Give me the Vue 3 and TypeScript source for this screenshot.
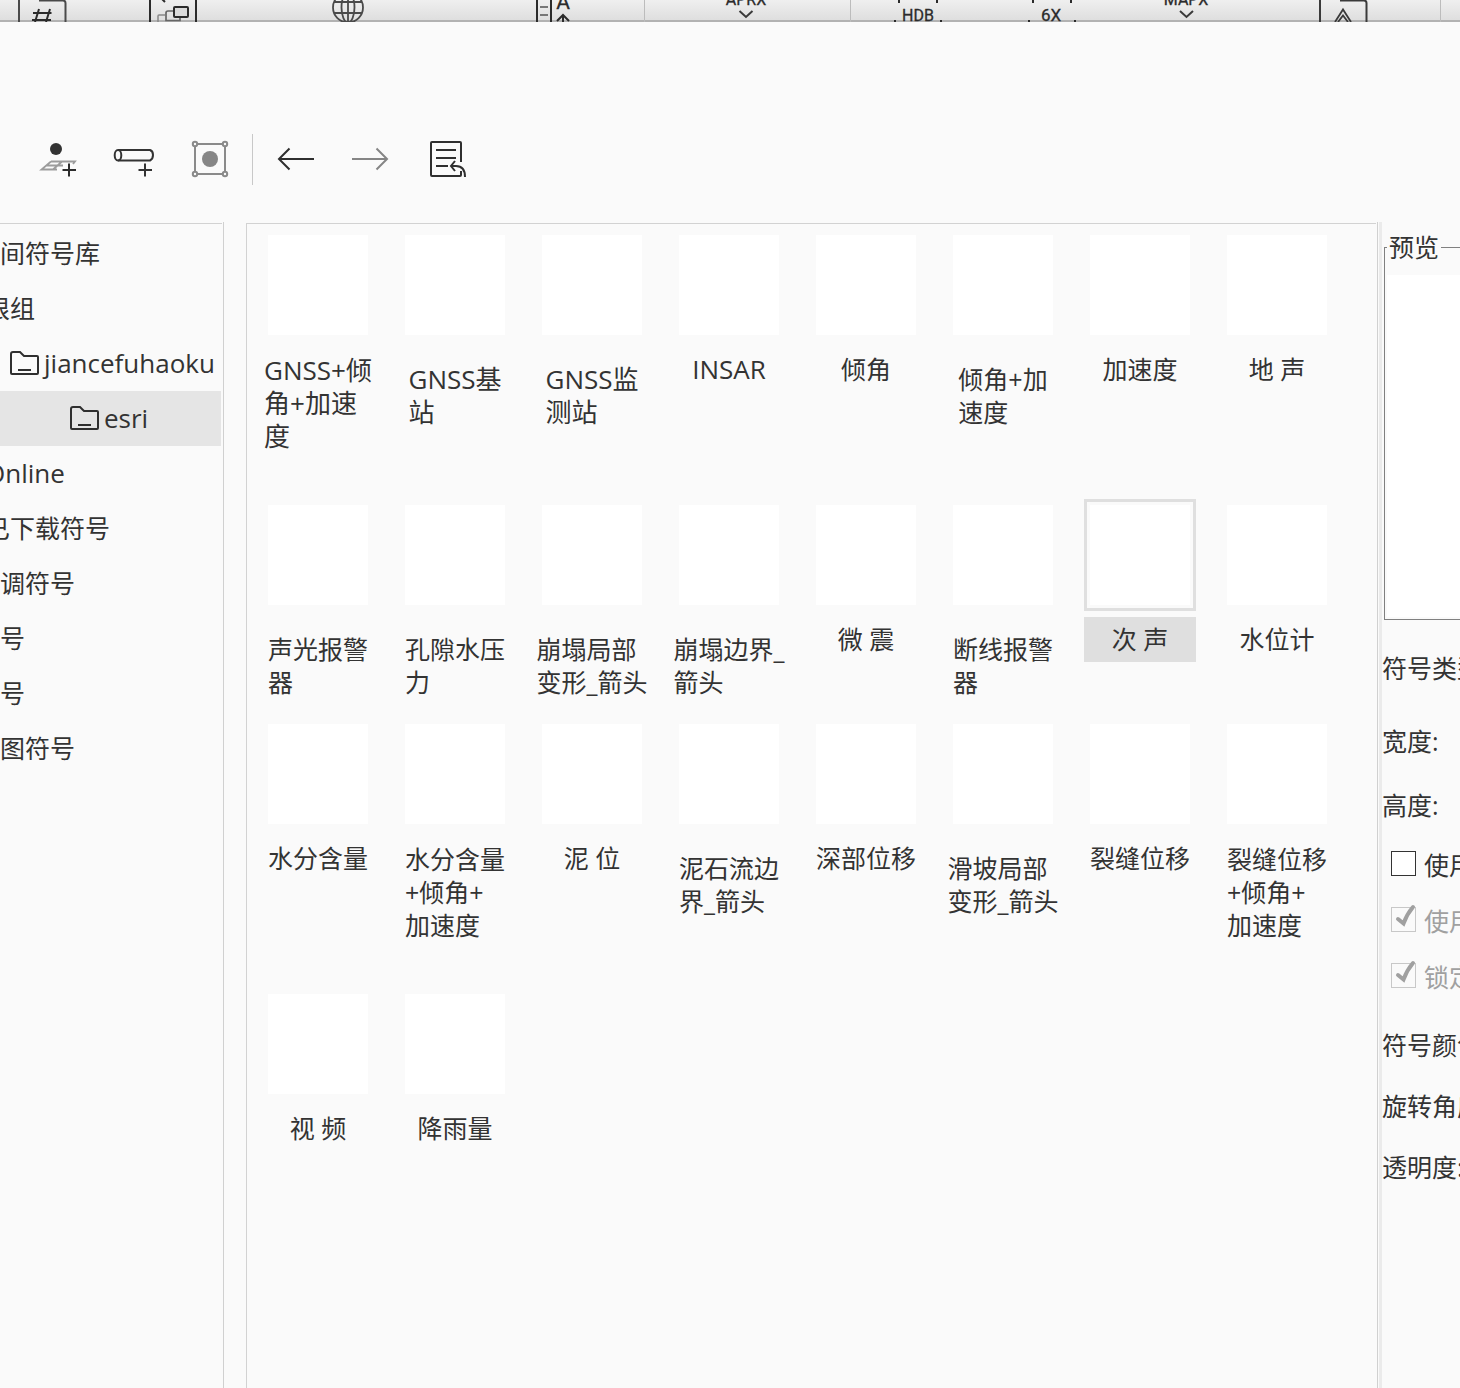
<script setup lang="ts">
import { ref } from 'vue'

interface TreeNode {
  label: string
  folder?: boolean
  level?: string
}

interface PropertyRow {
  label: string
  group: string
}

interface CheckRow {
  id: string
  label: string
  checked: boolean
  disabled: boolean
}

const tree: TreeNode[] = [
  { label: '间符号库' },
  { label: '根组', level: 'cut' },
  { label: 'jiancefuhaoku', folder: true, level: 'child' },
  { label: 'esri', folder: true, level: 'grandchild' },
  { label: 'Online', level: 'cut' },
  { label: '已下载符号', level: 'cut' },
  { label: '调符号' },
  { label: '号' },
  { label: '号' },
  { label: '图符号' },
]
const activeNode = ref('esri')

const symbols: string[] = [
  'GNSS+倾\n角+加速\n度', 'GNSS基\n站', 'GNSS监\n测站', 'INSAR', '倾角', '倾角+加\n速度', '加速度', '地 声',
  '声光报警\n器', '孔隙水压\n力', '崩塌局部\n变形_箭头', '崩塌边界_\n箭头', '微 震', '断线报警\n器', '次 声', '水位计',
  '水分含量', '水分含量\n+倾角+\n加速度', '泥 位', '泥石流边\n界_箭头', '深部位移', '滑坡局部\n变形_箭头', '裂缝位移', '裂缝位移\n+倾角+\n加速度',
  '视 频', '降雨量',
]
const activeSymbol = ref('次 声')

const lineCount = (name: string): number => name.split('\n').length
const isLatin = (name: string): boolean => /[A-Za-z]/.test(name)

const sizeRows: PropertyRow[] = [
  { label: '符号类型:', group: 'type' },
  { label: '宽度:', group: 'size' },
  { label: '高度:', group: 'size' },
]
const styleRows: string[] = ['符号颜色:', '旋转角度:', '透明度:']

const checks = ref<CheckRow[]>([
  { id: 'opt-a', label: '使用', checked: false, disabled: false },
  { id: 'opt-b', label: '使用', checked: true, disabled: true },
  { id: 'opt-c', label: '锁定', checked: true, disabled: true },
])
</script>

<template>
  <div class="window">
    <header class="ribbon">
      <div class="ribbon-group">
        <button type="button" aria-label="网格">
          <svg width="84" height="22" viewBox="0 0 84 22">
            <path d="M19 0V22M39 0.500H63Q65.500 0.500 65.500 3V22" stroke="#4a4a4a" stroke-width="2" fill="none" />
            <path d="M39 9L35 22M50 9L46 22M33 13H51.500M32 20H51" stroke="#2b2b2b" stroke-width="2" fill="none" />
          </svg>
        </button>
        <button type="button" aria-label="层级">
          <svg width="176" height="22" viewBox="84 0 176 22">
            <path d="M150 0V22M196 0V22M162 -1L165 2" stroke="#2b2b2b" stroke-width="2" fill="none" />
            <path d="M165 15H159Q158 15 158 16V22" stroke="#888" stroke-width="1.500" fill="none" />
            <path d="M173 11H168Q166 11 166 13V20.500H180V17" stroke="#666" stroke-width="1.700" fill="none" />
            <rect x="174" y="7" width="14" height="10" rx="1" fill="#dadada" stroke="#2b2b2b" stroke-width="2" />
          </svg>
        </button>
        <button type="button" aria-label="在线">
          <svg width="176" height="22" viewBox="260 0 176 22">
            <g stroke="#4a4a4a" stroke-width="1.800" fill="none">
              <circle cx="348" cy="7.500" r="15" />
              <ellipse cx="348" cy="7.500" rx="6.500" ry="15" />
              <path d="M348 -8V22M334 2H362M334 13H362" />
            </g>
          </svg>
        </button>
        <button type="button" aria-label="标注">
          <svg width="208" height="22" viewBox="436 0 208 22">
            <path d="M537 0V22M551 0V22" stroke="#2b2b2b" stroke-width="2" fill="none" />
            <path d="M540 7H548M540 15H548" stroke="#777" stroke-width="2" />
            <text x="563" y="9" font-size="21" text-anchor="middle">A</text>
            <path d="M557 21L563 15L569 21M563 15V22" stroke="#2b2b2b" stroke-width="2" fill="none" />
          </svg>
        </button>
      </div>
      <div class="ribbon-group">
        <button type="button" aria-label="APRX">
          <svg width="205" height="22" viewBox="645 0 205 22">
            <text x="746" y="5" font-size="16" text-anchor="middle">APRX</text>
            <path d="M739.500 11L746 17L752.500 11" stroke="#3a3a3a" stroke-width="2" fill="none" />
          </svg>
        </button>
      </div>
      <div class="ribbon-group">
        <button type="button" aria-label="HDB">
          <svg width="134" height="22" viewBox="851 0 134 22">
            <path d="M899 0V3M937 0V3M894 21H896M940 21H942" stroke="#2b2b2b" stroke-width="2" />
            <text x="918" y="21" font-size="16" text-anchor="middle">HDB</text>
          </svg>
        </button>
        <button type="button" aria-label="6X">
          <svg width="130" height="22" viewBox="985 0 130 22">
            <path d="M1033 0V3M1071 0V3M1028 21H1030M1074 21H1076" stroke="#2b2b2b" stroke-width="2" />
            <text x="1051" y="21" font-size="17" text-anchor="middle">6X</text>
          </svg>
        </button>
        <button type="button" aria-label="MAPX">
          <svg width="145" height="22" viewBox="1115 0 145 22">
            <text x="1186" y="5" font-size="16" text-anchor="middle">MAPX</text>
            <path d="M1180 11L1186.500 17L1193 11" stroke="#3a3a3a" stroke-width="2" fill="none" />
          </svg>
        </button>
        <button type="button" aria-label="字体">
          <svg width="180" height="22" viewBox="1260 0 180 22">
            <path d="M1320 0V22M1340 0.500H1364Q1366.500 0.500 1366.500 3V22" stroke="#3a3a3a" stroke-width="2" fill="none" />
            <path d="M1335 22L1343 9.500L1351 22M1338 22L1343 15.500L1348 22" stroke="#3a3a3a" stroke-width="1.800" fill="none" />
          </svg>
        </button>
      </div>
    </header>

    <nav class="toolbar" aria-label="符号工具">
      <button type="button" aria-label="新建点符号">
        <svg viewBox="20 134 76 51">
          <circle cx="56" cy="149" r="6" fill="#333" />
          <path d="M51 161.500H75L73 164M51 161.500L41.500 169.500H57M46 165.500H63M62 161.500L53 169.500" stroke="#9c9c9c" stroke-width="1.800" fill="none" />
          <path d="M62.500 170H76M69 163.500V176.500" stroke="#2b2b2b" stroke-width="2" />
        </svg>
      </button>
      <button type="button" aria-label="新建线符号">
        <svg viewBox="96 134 76 51">
          <g stroke="#333" stroke-width="2" fill="none">
            <path d="M118 150H150Q153 151 153 155T150 160.500H118" />
            <ellipse cx="118" cy="155.200" rx="3.300" ry="5.200" />
            <path d="M138.500 170H152M145 163.500V176.500" />
          </g>
        </svg>
      </button>
      <button type="button" aria-label="新建面符号">
        <svg viewBox="172 134 76 51">
          <g stroke="#8a8a8a" stroke-width="2" fill="#fafafa">
            <rect x="195" y="144" width="30" height="30" />
            <circle cx="195" cy="144" r="2.200" />
            <circle cx="225" cy="144" r="2.200" />
            <circle cx="195" cy="174" r="2.200" />
            <circle cx="225" cy="174" r="2.200" />
          </g>
          <circle cx="210" cy="159" r="8" fill="#868686" />
        </svg>
      </button>
      <span class="divider"></span>
      <button type="button" aria-label="撤销">
        <svg viewBox="258 134 76 51">
          <path d="M314 159H279M289.500 148.500L279 159L289.500 169.500" stroke="#2f2f2f" stroke-width="2" fill="none" />
        </svg>
      </button>
      <button type="button" aria-label="重做" disabled>
        <svg viewBox="334 134 76 51">
          <path d="M352 159H387M376.500 148.500L387 159L376.500 169.500" stroke="#858585" stroke-width="2" fill="none" />
        </svg>
      </button>
      <button type="button" aria-label="还原">
        <svg viewBox="410 134 76 51">
          <g stroke="#2f2f2f" stroke-width="2" fill="none">
            <path d="M461 162V143Q461 142 460 142H432Q431 142 431 143V175Q431 176 432 176H460Q461 176 461 175V171" />
            <path d="M436 150H456M436 158H456M436 166H448M455 161L451 166L455 171M451 166H456Q465 166 465 177" />
          </g>
        </svg>
      </button>
    </nav>

    <main class="workspace">
      <aside class="tree-pane">
        <ul class="tree">
          <li
            v-for="(node, i) in tree"
            :key="i"
            :class="[node.level, { active: node.label === activeNode, latin: isLatin(node.label) }]"
            @click="activeNode = node.label"
          >
            <svg v-if="node.folder" class="folder" width="30" height="26" viewBox="0 0 30 26" aria-hidden="true">
              <path d="M3 1H10L14 5H27Q28 5 28 6V22Q28 23 27 23H2Q1 23 1 22V3Q1 1 3 1ZM8 19H21" stroke="#2f2f2f" stroke-width="2" fill="none" />
            </svg>
            <span>{{ node.label }}</span>
          </li>
        </ul>
      </aside>
      <div class="edge left-edge"></div>

      <section class="symbols">
        <div
          v-for="name in symbols"
          :key="name"
          class="symbol"
          :class="{ active: name === activeSymbol, latin: isLatin(name) }"
          @click="activeSymbol = name"
        >
          <div class="frame"><div class="thumb"></div></div>
          <div class="caption" :class="'lines-' + lineCount(name)"><span>{{ name }}</span></div>
        </div>
      </section>
      <div class="edge right-edge"></div>
      <div class="splitter"></div>

      <aside class="props">
        <fieldset class="preview">
          <legend>预览</legend>
          <div class="canvas"></div>
        </fieldset>
        <div v-for="row in sizeRows" :key="row.label" class="prop" :class="row.group">{{ row.label }}</div>
        <div class="checks">
          <label v-for="c in checks" :key="c.id" :for="c.id" :class="{ disabled: c.disabled }">
            <span class="box">
              <input :id="c.id" v-model="c.checked" type="checkbox" :disabled="c.disabled" />
              <svg v-if="c.checked" width="25" height="29" viewBox="0 0 25 29" aria-hidden="true">
                <path d="M7 16L12.500 20.500Q16 11 22 4" stroke="#a0a0a0" stroke-width="4" stroke-linecap="round" fill="none" />
              </svg>
            </span>
            <span>{{ c.label }}</span>
          </label>
        </div>
        <div v-for="label in styleRows" :key="label" class="prop">{{ label }}</div>
      </aside>
    </main>
  </div>
</template>

<style>
body {
  margin: 0;
  background: #fafafa;
}
</style>

<style scoped>
.window {
  display: flex;
  flex-direction: column;
  min-height: 100vh;
  overflow: hidden;
  background: #fafafa;
  color: #333;
  font-family: "Open Sans", "Noto Sans CJK SC", sans-serif;
  font-size: 25px;
  line-height: 33px;
}

.latin {
  font-size: 26px;
}

button {
  padding: 0;
  border: 0;
  background: none;
}

svg {
  display: block;
}

.ribbon {
  display: flex;
  height: 22px;
  overflow: hidden;
  background: linear-gradient(transparent 20px, #b2b2b2 20px), linear-gradient(#efefef, #dddddd);
}

.ribbon-group {
  display: flex;
  border-right: 1px solid #bcbcbc;
}

.ribbon text {
  fill: #2b2b2b;
  stroke: #2b2b2b;
  stroke-width: 0.3px;
  font-family: Roboto, sans-serif;
}

.toolbar {
  display: flex;
  height: 51px;
  padding: 112px 20px 37px;
}

.toolbar svg {
  width: 76px;
  height: 51px;
}

.divider {
  width: 1px;
  margin: 0 5px 0 4px;
  background: #c8c8c8;
}

.workspace {
  display: flex;
  flex: 1;
}

.tree-pane {
  flex: none;
  width: 222px;
  margin-top: 1px;
  overflow: hidden;
  border-top: 1px solid #d2d2d2;
}

.tree {
  margin: 0;
  padding: 2px 1px 0 0;
  list-style: none;
}

.tree li {
  display: flex;
  align-items: center;
  height: 55px;
  gap: 4px;
  white-space: nowrap;
}

.tree .cut span {
  margin-left: -15px;
}

.tree .child {
  padding-left: 10px;
}

.tree .grandchild {
  padding-left: 70px;
}

.tree .active {
  background: #e5e5e5;
}

.folder {
  flex: none;
}

.edge {
  flex: none;
  width: 1px;
  background: #d0d0d0;
}

.left-edge {
  margin: 0 22px 0 1px;
}

.right-edge {
  margin: 0 1px;
}

.symbols {
  display: grid;
  flex: 1;
  grid-template-columns: repeat(auto-fill, 112px);
  align-content: start;
  column-gap: 25px;
  margin-top: 1px;
  padding: 5px 15px;
  border-top: 1px solid #d2d2d2;
  border-left: 1px solid #d2d2d2;
}

.frame {
  padding: 3px;
  border: 3px solid transparent;
}

.thumb {
  height: 100px;
  background: #fff;
}

.caption {
  display: flex;
  justify-content: center;
  margin-top: 6px;
  white-space: pre;
}

.lines-1 {
  padding: 6px 0;
}

.lines-2 {
  padding: 16px 0 19px;
}

.lines-3 {
  padding: 7px 0 46px;
}

.symbol.active .frame {
  border-color: #dfdfdf;
}

.symbol.active .caption {
  background: #dfdfdf;
}

.splitter {
  flex: none;
  width: 3px;
  background: #ebebeb;
}

.props {
  flex: none;
  width: 78px;
  overflow: hidden;
  white-space: nowrap;
}

.preview {
  width: 240px;
  box-sizing: border-box;
  height: 389px;
  margin: 9px 0 16px 2px;
  padding: 11px 2px 2px;
  border: 1px solid #808080;
}

.preview legend {
  margin-left: 0;
  padding: 0 2px;
}

.canvas {
  height: 342px;
  background: #fff;
}

.prop {
  line-height: 61px;
}

.prop.type {
  margin-bottom: 9px;
}

.prop.type,
.prop.size {
  line-height: 64px;
}

.checks {
  display: flex;
  flex-direction: column;
  margin: 0 0 10px 9px;
}

.checks label {
  display: flex;
  align-items: center;
  gap: 8px;
  height: 56px;
}

.checks .disabled {
  color: #a0a0a0;
}

.box {
  position: relative;
  width: 25px;
  height: 25px;
  margin-bottom: 4px;
}

.box input {
  display: block;
  width: 25px;
  height: 25px;
  box-sizing: border-box;
  margin: 0;
  border: 1px solid #333;
  background: #fff;
  appearance: none;
}

.box input:disabled {
  border-color: #c8c8c8;
  background: #fafafa;
}

.box svg {
  position: absolute;
  bottom: 0;
  left: 0;
}
</style>
